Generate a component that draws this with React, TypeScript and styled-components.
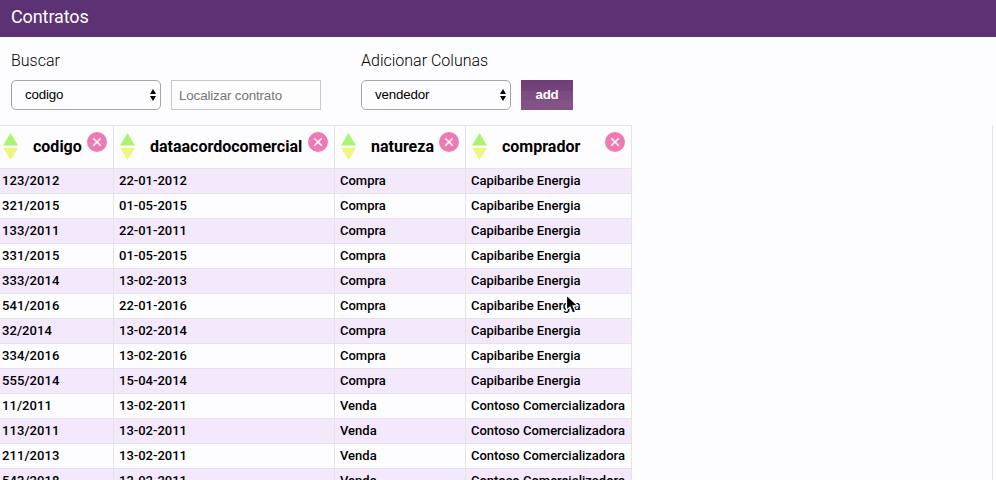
import React from "react";
import styled, { createGlobalStyle } from "styled-components";

const GlobalStyle = createGlobalStyle`
  * { box-sizing: border-box; }
  body {
    margin: 0;
    background: #fdfdff;
    color: #000;
    font-family: Roboto, "Liberation Sans", sans-serif;
    overflow: hidden;
  }
`;

const Page = styled.div`
  position: relative;
  display: flex;
  flex-direction: column;
  width: 996px;
  height: 480px;
  overflow: hidden;
`;

const TitleBar = styled.header`
  flex: none;
  height: 37px;
  padding-left: 11px;
  background: #5c3275;
  color: #fff;
  font-size: 18px;
  line-height: 34px;
  letter-spacing: -0.1px;
`;

const Toolbar = styled.section`
  flex: none;
  display: flex;
  gap: 40px;
  height: 88px;
  padding: 13px 11px 0;
`;

const Group = styled.div`
  display: flex;
  flex-direction: column;
  gap: 9px;
`;

const GroupLabel = styled.label`
  height: 21px;
  font-size: 16px;
  font-weight: 300;
  line-height: 21px;
`;

const Controls = styled.div`
  display: flex;
  gap: 10px;
`;

const Select = styled.button`
  display: flex;
  align-items: center;
  justify-content: space-between;
  width: 150px;
  height: 30px;
  padding: 0 4px 1px 13px;
  border: 1px solid #a6a6a6;
  border-radius: 5px;
  background: #fdfdff;
  color: #000;
  font: 13.33px/18px "Liberation Sans", sans-serif;
  letter-spacing: -0.15px;
`;

const SearchInput = styled.input`
  width: 150px;
  height: 30px;
  padding: 1px 7px 0;
  border: 1px solid #cac6ca;
  background: #fdfdff;
  font: 13.33px "Liberation Sans", sans-serif;
  letter-spacing: -0.12px;
  &::placeholder { color: #757575; }
`;

const AddButton = styled.button`
  width: 52px;
  height: 30px;
  padding: 0 0 1px;
  border: 0;
  background: linear-gradient(#6f3d76 0, #74447c 11px, #7c4b80 11px, #7e4d82 20px, #835388 21px, #835388 100%);
  color: #fff;
  font: bold 13.33px "Liberation Sans", sans-serif;
  letter-spacing: -0.3px;
`;

const Results = styled.main`
  flex: 1;
  width: 993px;
  min-height: 0;
  border-right: 1px solid #e2e2e6;
  overflow: hidden;
`;

const Row = styled.div<{ $tinted?: boolean }>`
  display: grid;
  grid-template-columns: 114px 221px 131px 166px;
  width: 632px;
  background: ${(p) => (p.$tinted ? "#f4e8fc" : "#fdfdff")};
`;

const HeaderRow = styled(Row)`
  border-top: 1px solid #e4e4e6;
`;

const HeaderCell = styled.div<{ $first?: boolean }>`
  display: flex;
  height: 43px;
  padding-right: 6px;
  padding-left: ${(p) => (p.$first ? 3 : 6)}px;
  border-right: 1px solid #e4e4e6;
  border-bottom: 1px solid #e4e4e6;
`;

const HeaderText = styled.span`
  flex: 1;
  margin-left: 15px;
  font-size: 16px;
  font-weight: 700;
  line-height: 41px;
  white-space: nowrap;
`;

const SortIcon = styled.svg`
  flex: none;
  width: 15px;
  height: 27px;
  margin-top: 7px;
`;

const CloseIcon = styled.svg`
  flex: none;
  width: 20px;
  height: 20px;
  margin-top: 6px;
`;

const Cell = styled.div<{ $first?: boolean }>`
  height: 25px;
  padding-left: ${(p) => (p.$first ? 2 : 5)}px;
  border-right: 1px solid #e4e4e6;
  border-bottom: 1px solid #e4e4e6;
  font-size: 13px;
  font-weight: 500;
  line-height: 23px;
  letter-spacing: ${(p) => (p.$first ? "0.08px" : "0")};
  white-space: nowrap;
`;

const Pointer = styled.svg`
  position: absolute;
  left: 565px;
  top: 294px;
  width: 14px;
  height: 21px;
`;

const Stepper = () => (
  <svg width="6" height="12" viewBox="0 0 6 12">
    <path d="M3 0L6 5H0ZM0 7H6L3 12Z" fill="#000" />
  </svg>
);

const columns = ["codigo", "dataacordocomercial", "natureza", "comprador"];

const capibaribe = "Capibaribe Energia";
const contoso = "Contoso Comercializadora";

const contracts = [
  ["123/2012", "22-01-2012", "Compra", capibaribe],
  ["321/2015", "01-05-2015", "Compra", capibaribe],
  ["133/2011", "22-01-2011", "Compra", capibaribe],
  ["331/2015", "01-05-2015", "Compra", capibaribe],
  ["333/2014", "13-02-2013", "Compra", capibaribe],
  ["541/2016", "22-01-2016", "Compra", capibaribe],
  ["32/2014", "13-02-2014", "Compra", capibaribe],
  ["334/2016", "13-02-2016", "Compra", capibaribe],
  ["555/2014", "15-04-2014", "Compra", capibaribe],
  ["11/2011", "13-02-2011", "Venda", contoso],
  ["113/2011", "13-02-2011", "Venda", contoso],
  ["211/2013", "13-02-2011", "Venda", contoso],
  ["543/2018", "13-02-2011", "Venda", contoso],
];

export default function App() {
  return (
    <Page>
      <GlobalStyle />
      <TitleBar>Contratos</TitleBar>
      <Toolbar>
        <Group>
          <GroupLabel>Buscar</GroupLabel>
          <Controls>
            <Select>codigo<Stepper /></Select>
            <SearchInput placeholder="Localizar contrato" />
          </Controls>
        </Group>
        <Group>
          <GroupLabel>Adicionar Colunas</GroupLabel>
          <Controls>
            <Select>vendedor<Stepper /></Select>
            <AddButton>add</AddButton>
          </Controls>
        </Group>
      </Toolbar>
      <Results>
        <HeaderRow>
          {columns.map((name, i) => (
            <HeaderCell key={name} $first={i === 0}>
              <SortIcon viewBox="0 0 15 27">
                <path d="M7.5 0L15 12.5H0Z" fill="#a9f56f" />
                <path d="M0 15H15L7.5 27Z" fill="#eef77a" />
              </SortIcon>
              <HeaderText>{name}</HeaderText>
              <CloseIcon viewBox="0 0 20 20">
                <circle cx="10" cy="10" r="10" fill="#f079b4" />
                <path d="M6.2 6.2L13.8 13.8M13.8 6.2L6.2 13.8" stroke="#fff" strokeWidth="1.6" />
              </CloseIcon>
            </HeaderCell>
          ))}
        </HeaderRow>
        {contracts.map((values, r) => (
          <Row key={values[0]} $tinted={r % 2 === 0}>
            {values.map((value, i) => (
              <Cell key={i} $first={i === 0}>{value}</Cell>
            ))}
          </Row>
        ))}
      </Results>
      <Pointer viewBox="0 0 14 21">
        <path
          d="M1.5 1V16.2L5 13L7.6 19L10.6 17.7L8 11.8H13Z"
          fill="#000"
          stroke="#fff"
          strokeWidth="1.2"
        />
      </Pointer>
    </Page>
  );
}
